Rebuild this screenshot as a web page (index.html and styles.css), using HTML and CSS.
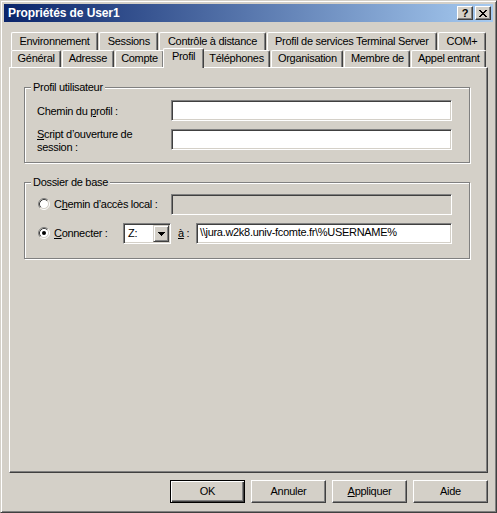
FILE: index.html
```html
<!DOCTYPE html>
<html lang="fr">
<head>
<meta charset="utf-8">
<title>Propriétés de User1</title>
<link rel="stylesheet" href="styles.css">
</head>
<body>
<div class="window">
  <div class="titlebar">
    <span class="title">Propriétés de User1</span>
    <span class="capbtn help">?</span>
    <span class="capbtn close">
      <svg width="8" height="7" viewBox="0 0 8 7" shape-rendering="crispEdges">
        <path fill="#000" d="M0 0h2v1H0zM6 0h2v1H6zM1 1h2v1H1zM5 1h2v1H5zM2 2h4v1H2zM3 3h2v1H3zM2 4h4v1H2zM1 5h2v1H1zM5 5h2v1H5zM0 6h2v1H0zM6 6h2v1H6z"/>
      </svg>
    </span>
  </div>
  <div class="client">
    <div class="tabrow back">
      <div class="tab">Environnement</div>
      <div class="tab">Sessions</div>
      <div class="tab">Contrôle à distance</div>
      <div class="tab">Profil de services Terminal Server</div>
      <div class="tab">COM+</div>
    </div>
    <div class="tabrow front">
      <div class="tab">Général</div>
      <div class="tab">Adresse</div>
      <div class="tab">Compte</div>
      <div class="tab selected">Profil</div>
      <div class="tab">Téléphones</div>
      <div class="tab">Organisation</div>
      <div class="tab">Membre de</div>
      <div class="tab">Appel entrant</div>
    </div>
    <div class="panel">
      <div class="group g1">
        <div class="legend">Profil utilisateur</div>
        <div class="frow">
          <label class="lbl l1">Chemin du <u>p</u>rofil :</label>
          <div class="edit"></div>
        </div>
        <div class="frow">
          <label class="lbl l2"><u>S</u>cript d’ouverture de<br>session :</label>
          <div class="edit"></div>
        </div>
      </div>
      <div class="group g2">
        <div class="legend">Dossier de base</div>
        <div class="frow mid">
          <span class="rlbl wide">
            <svg class="radio" width="12" height="12" viewBox="0 0 12 12">
              <circle cx="6" cy="6" r="4.5" fill="#fff"/>
              <path d="M2.11 9.89A5.5 5.5 0 0 1 9.89 2.11" fill="none" stroke="#808080"/>
              <path d="M9.89 2.11A5.5 5.5 0 0 1 2.11 9.89" fill="none" stroke="#fff"/>
              <path d="M2.82 9.18A4.5 4.5 0 0 1 9.18 2.82" fill="none" stroke="#404040"/>
              <path d="M9.18 2.82A4.5 4.5 0 0 1 2.82 9.18" fill="none" stroke="#D4D0C8"/>
            </svg>
            <span>C<u>h</u>emin d’accès local :</span>
          </span>
          <div class="edit disabled"></div>
        </div>
        <div class="frow mid">
          <span class="rlbl narrow">
            <svg class="radio" width="12" height="12" viewBox="0 0 12 12">
              <circle cx="6" cy="6" r="4.5" fill="#fff"/>
              <path d="M2.11 9.89A5.5 5.5 0 0 1 9.89 2.11" fill="none" stroke="#808080"/>
              <path d="M9.89 2.11A5.5 5.5 0 0 1 2.11 9.89" fill="none" stroke="#fff"/>
              <path d="M2.82 9.18A4.5 4.5 0 0 1 9.18 2.82" fill="none" stroke="#404040"/>
              <path d="M9.18 2.82A4.5 4.5 0 0 1 2.82 9.18" fill="none" stroke="#D4D0C8"/>
              <circle cx="6" cy="6" r="2" fill="#000"/>
            </svg>
            <span><u>C</u>onnecter :</span>
          </span>
          <div class="combo">
            <span class="combo-val">Z:</span>
            <span class="combo-btn">
              <svg width="7" height="4" viewBox="0 0 7 4" shape-rendering="crispEdges">
                <path fill="#000" d="M0 0h7v1H0zM1 1h5v1H1zM2 2h3v1H2zM3 3h1v1H3z"/>
              </svg>
            </span>
          </div>
          <span class="to"><u>à</u> :</span>
          <div class="edit">\\jura.w2k8.univ-fcomte.fr\%USERNAME%</div>
        </div>
      </div>
    </div>
    <div class="buttons">
      <div class="btn default">OK</div>
      <div class="btn">Annuler</div>
      <div class="btn"><span><u>A</u>ppliquer</span></div>
      <div class="btn">Aide</div>
    </div>
  </div>
</div>
</body>
</html>
```

FILE: styles.css
```css
html, body {
  margin: 0;
  padding: 0;
}

body {
  background: #D4D0C8;
  font-family: "Liberation Sans", Arial, sans-serif;
  font-size: 11px;
  letter-spacing: -0.3px;
  color: #000;
}

.window {
  width: 497px;
  height: 513px;
  box-sizing: border-box;
  border: 1px solid;
  border-color: #D4D0C8 #404040 #404040 #D4D0C8;
  box-shadow: inset 1px 1px #fff, inset -1px -1px #808080;
  padding: 3px;
  background: #D4D0C8;
  display: flex;
  flex-direction: column;
}

/* Title bar */
.titlebar {
  flex: none;
  height: 18px;
  display: flex;
  align-items: center;
  padding: 0 2px;
  background: linear-gradient(to right, #0A246A, #A6CAF0);
}

.title {
  flex: 1;
  padding-left: 2px;
  color: #fff;
  font-weight: bold;
  font-size: 12px;
  letter-spacing: -0.1px;
  line-height: 14px;
  white-space: nowrap;
}

.capbtn {
  flex: none;
  width: 16px;
  height: 14px;
  box-sizing: border-box;
  margin-left: 2px;
  border: 1px solid;
  border-color: #fff #404040 #404040 #fff;
  box-shadow: inset -1px -1px #808080;
  background: #D4D0C8;
  display: flex;
  align-items: center;
  justify-content: center;
}

.help {
  font-weight: bold;
  font-size: 11px;
  line-height: 12px;
  letter-spacing: 0;
}

/* Client area */
.client {
  flex: 1;
  display: flex;
  flex-direction: column;
  padding: 10px 5px 0;
}

.tabrow {
  flex: none;
  display: flex;
  align-items: flex-start;
  gap: 1px;
  margin: 0 2px;
}

.tabrow.back { height: 18px; }
.tabrow.front { height: 17px; }

.tab {
  flex: 1 1 auto;
  box-sizing: border-box;
  padding: 0 3px;
  border-top: 1px solid #fff;
  border-left: 1px solid #fff;
  border-right: 1px solid #404040;
  border-radius: 2px 2px 0 0;
  box-shadow: inset -1px 0 #808080;
  background: #D4D0C8;
  text-align: center;
  white-space: nowrap;
}

.back .tab {
  height: 18px;
  line-height: 16px;
}

.front .tab {
  height: 17px;
  line-height: 15px;
}

.front .tab.selected {
  position: relative;
  z-index: 1;
  height: 20px;
  line-height: 14px;
  margin: -2px -2px -1px;
  padding: 0 5px;
}

/* Tab page */
.panel {
  flex: none;
  height: 406px;
  box-sizing: border-box;
  border: 1px solid;
  border-color: #fff #404040 #404040 #fff;
  box-shadow: inset -1px -1px #808080;
  padding: 19px 17px 0 14px;
}

.group {
  border: 1px solid #808080;
  box-shadow: inset 1px 1px #fff, 1px 1px #fff;
  padding: 0 17px 8px 12px;
}

.group.g2 {
  margin-top: 19px;
  padding-bottom: 14px;
}

.legend {
  width: fit-content;
  margin: -7px 0 6px -6px;
  padding: 0 2px;
  line-height: 13px;
  background: #D4D0C8;
  white-space: nowrap;
}

.g2 .legend {
  margin-bottom: 5px;
}

.frow {
  display: flex;
  align-items: flex-start;
  line-height: 13px;
}

.frow + .frow {
  margin-top: 8px;
}

.frow.mid {
  align-items: center;
}

.lbl {
  flex: none;
  width: 134px;
  white-space: nowrap;
}

.l1 { padding-top: 5px; }
.l2 { margin-top: -1px; }

.edit {
  flex: 1;
  min-width: 0;
  height: 21px;
  box-sizing: border-box;
  border: 1px solid;
  border-color: #808080 #fff #fff #808080;
  box-shadow: inset 1px 1px #404040, inset -1px -1px #D4D0C8;
  background: #fff;
  padding: 0 3px;
  line-height: 17px;
  white-space: nowrap;
  overflow: hidden;
}

.edit.disabled {
  background: #D4D0C8;
}

.rlbl {
  flex: none;
  display: flex;
  align-items: center;
  white-space: nowrap;
}

.rlbl.wide { width: 134px; }
.rlbl.narrow { width: 86px; }

.radio {
  flex: none;
  margin: -1px 4px 0 1px;
}

.combo {
  flex: none;
  width: 48px;
  height: 21px;
  box-sizing: border-box;
  border: 1px solid;
  border-color: #808080 #fff #fff #808080;
  box-shadow: inset 1px 1px #404040, inset -1px -1px #D4D0C8;
  background: #fff;
  padding: 1px;
  display: flex;
  align-items: center;
}

.combo-val {
  flex: 1;
  padding-left: 3px;
  line-height: 17px;
}

.combo-btn {
  flex: none;
  width: 16px;
  height: 17px;
  box-sizing: border-box;
  border: 1px solid;
  border-color: #D4D0C8 #404040 #404040 #D4D0C8;
  box-shadow: inset 1px 1px #fff, inset -1px -1px #808080;
  background: #D4D0C8;
  display: flex;
  align-items: center;
  justify-content: center;
}

.to {
  flex: none;
  width: 25px;
  box-sizing: border-box;
  padding-left: 7px;
  white-space: nowrap;
}

/* Dialog buttons */
.buttons {
  flex: none;
  display: flex;
  justify-content: flex-end;
  gap: 6px;
  margin-top: 7px;
}

.btn {
  width: 75px;
  height: 23px;
  box-sizing: border-box;
  border: 1px solid;
  border-color: #fff #404040 #404040 #fff;
  box-shadow: inset -1px -1px #808080;
  background: #D4D0C8;
  display: flex;
  align-items: center;
  justify-content: center;
  line-height: 13px;
}

.btn.default {
  border-color: #000;
  box-shadow: inset 1px 1px #fff, inset -1px -1px #404040, inset -2px -2px #808080;
}
```
